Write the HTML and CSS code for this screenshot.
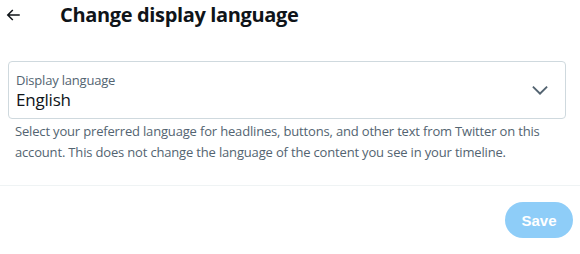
FILE: index.html
```html
<!DOCTYPE html>
<html lang="en">
<head>
    <meta charset="UTF-8">
    <title>Change display language</title>
    <link rel="stylesheet" href="styles.css">
</head>
<body>
    <div class="header">
        <button class="back" aria-label="Back">
            <svg viewBox="0 0 24 24" width="18" height="18"><path d="M7.414 13l5.043 5.04-1.414 1.42L3.586 12l7.457-7.46 1.414 1.42L7.414 11H21v2H7.414z"/></svg>
        </button>
        <h1 class="title">Change display language</h1>
    </div>

    <div class="section">
        <div class="select">
            <div class="select-text">
                <span class="select-label">Display language</span>
                <span class="select-value">English</span>
            </div>
            <svg class="chevron" viewBox="0 0 24 24" width="22" height="22"><path d="M3.543 8.96l1.414-1.42L12 14.59l7.043-7.05 1.414 1.42L12 17.41 3.543 8.96z"/></svg>
        </div>
        <p class="help">Select your preferred language for headlines, buttons, and other text from Twitter on this account. This does not change the language of the content you see in your timeline.</p>
    </div>

    <div class="footer">
        <button class="save" disabled>Save</button>
    </div>
</body>
</html>
```

FILE: styles.css
```css
body {
    margin: 0;
    background: #fff;
    font-family: "Segoe UI", "Open Sans", Arial, sans-serif;
    color: #0f1419;
}
.header {
    display: flex;
    align-items: center;
    height: 30px;
    padding: 0 4px;
}
.back {
    width: 18px;
    height: 18px;
    padding: 0;
    border: none;
    background: none;
    display: flex;
    align-items: center;
    justify-content: center;
    margin-right: 38px;
}
.back svg { fill: #0f1419; }
.title {
    margin: 0;
    font-size: 20px;
    font-weight: 700;
    line-height: 24px;
    letter-spacing: -0.35px;
}
.section {
    padding: 31px 14px 22px 8px;
    border-bottom: 1px solid #eff3f4;
}
.select {
    display: flex;
    align-items: center;
    justify-content: space-between;
    height: 56px;
    border: 1px solid #cfd9de;
    border-radius: 4px;
    padding: 0 14px 0 7px;
}
.select-text {
    display: flex;
    flex-direction: column;
    padding-top: 4px;
}
.select-label {
    font-size: 13px;
    color: #536471;
    line-height: 16px;
    letter-spacing: -0.2px;
}
.select-value {
    font-size: 17px;
    line-height: 24px;
    letter-spacing: -0.2px;
}
.chevron { fill: #536471; }
.help {
    margin: 2px 0 0 7px;
    font-size: 13px;
    line-height: 21px;
    letter-spacing: -0.17px;
    color: #536471;
}
.footer {
    display: flex;
    justify-content: flex-end;
    padding: 16px 7px 0 0;
}
.save {
    height: 36px;
    width: 68px;
    border: none;
    border-radius: 18px;
    background: #8ecdf8;
    color: #fff;
    font-family: "Liberation Sans", Arial, sans-serif;
    font-weight: 700;
    font-size: 15px;
}
```
